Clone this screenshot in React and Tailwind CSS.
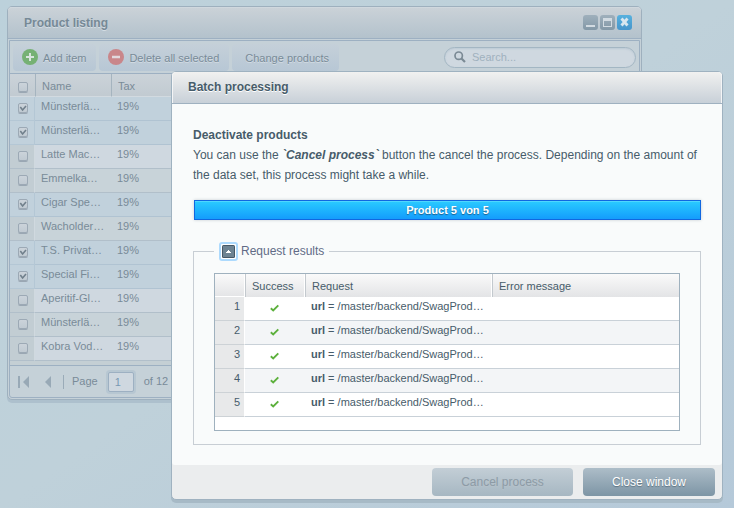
import React from "react";

const products = [
  { name: "Münsterlä…", selected: true },
  { name: "Münsterlä…", selected: true },
  { name: "Latte Mac…", selected: false },
  { name: "Emmelka…", selected: false },
  { name: "Cigar Spe…", selected: true },
  { name: "Wacholder…", selected: false },
  { name: "T.S. Privat…", selected: true },
  { name: "Special Fi…", selected: true },
  { name: "Aperitif-Gl…", selected: false },
  { name: "Münsterlä…", selected: false },
  { name: "Kobra Vod…", selected: false },
];

const requests = [1, 2, 3, 4, 5];

function CheckBox({ label, checked }) {
  return (
    <label className="relative ml-2 block size-[10px]">
      <input
        type="checkbox"
        defaultChecked={checked}
        aria-label={label}
        className="peer block size-full appearance-none rounded-[2px] border border-[#9ca9b5] bg-linear-to-b from-[#cbd3da] to-[#c0cad2] shadow-[0_1px_0_#9aa7b3]"
      />
      <svg
        viewBox="0 0 10 10"
        className="pointer-events-none absolute inset-0 hidden size-full peer-checked:block"
        fill="none"
        stroke="#71808c"
        strokeWidth="1.6"
      >
        <path d="M2.300 4 4.600 7 8 3" />
      </svg>
    </label>
  );
}

function ToolButton({ children }) {
  return (
    <button
      type="button"
      className="flex h-[27px] items-center gap-[5px] rounded bg-linear-to-b from-[#c5d0d9] to-[#b7c7d5] text-[11px] text-[#798b98] [text-shadow:0_1px_0_#d3dce3]"
    >
      {children}
    </button>
  );
}

function ProductWindow() {
  return (
    <section className="absolute top-[6px] right-[92px] left-[7px] rounded-[5px] border border-[#9eb0be] bg-[#c5d1d8] shadow-[0_3px_0_#adc0cd]">
      <header className="flex h-8 items-center justify-between rounded-t border-b border-[#9db0c2] bg-linear-to-b from-[#cbd2d8] to-[#b3c2cc] pr-[9px] pl-4 shadow-[inset_0_1px_0_#d0d8de]">
        <h2 className="text-xs leading-3 font-bold text-[#768996] [text-shadow:0_1px_0_#d3dce3]">Product listing</h2>
        <div className="flex gap-[2px]">
          <button type="button" aria-label="Minimize" className="size-[15px] rounded-[3px] bg-linear-to-b from-[#9fb0bc] to-[#8398a7]">
            <svg viewBox="0 0 15 15" className="size-full">
              <path d="M3 10h9v2H3z" fill="#d2dbe2" />
            </svg>
          </button>
          <button type="button" aria-label="Maximize" className="size-[15px] rounded-[3px] bg-linear-to-b from-[#9fb0bc] to-[#8398a7]">
            <svg viewBox="0 0 15 15" className="size-full">
              <path fillRule="evenodd" d="M3 3h9v9H3zM4 6v5h7V6z" fill="#d2dbe2" />
            </svg>
          </button>
          <button type="button" aria-label="Close" className="size-[15px] rounded-[3px] bg-linear-to-b from-[#57b1de] to-[#4795cb]">
            <svg viewBox="0 0 15 15" className="size-full">
              <path d="M4.500 3.500 10.500 10.500M10.500 3.500 4.500 10.500" stroke="#d8e6ef" strokeWidth="2.800" />
            </svg>
          </button>
        </div>
      </header>

      <div className="mx-px mt-px mb-px rounded-b-[3px] border border-[#9db0c2]">
        <div className="flex h-8 items-center gap-[3px] px-[3px]">
          <ToolButton>
            <svg viewBox="0 0 16 16" className="ml-[9px] size-4">
              <circle cx="8" cy="8" r="8" fill="#76b174" />
              <path d="M8 4v8M4 8h8" stroke="#d8e4dd" strokeWidth="2" />
            </svg>
            <span className="pt-[2px] pr-[10px]">Add item</span>
          </ToolButton>
          <ToolButton>
            <svg viewBox="0 0 16 16" className="ml-[9px] size-4">
              <circle cx="8" cy="8" r="8" fill="#c9868a" />
              <path d="M4 8h8" stroke="#e2d8dd" strokeWidth="2.500" />
            </svg>
            <span className="pt-[2px] pr-[10px]">Delete all selected</span>
          </ToolButton>
          <ToolButton>
            <span className="pt-[2px] pr-[10px] pl-[13px]">Change products</span>
          </ToolButton>
          <label className="ml-auto flex h-[21px] w-48 items-center gap-[6px] rounded-full border border-[#a3b6c3] bg-[#cfd8e0] pl-[9px] shadow-[inset_0_1px_2px_#bccad5]">
            <svg viewBox="0 0 12 12" className="size-3 shrink-0" fill="none" stroke="#7b8a95">
              <circle cx="4.700" cy="4.700" r="3.700" strokeWidth="1.700" />
              <path d="M7.500 7.500 11 11" strokeWidth="2.200" />
            </svg>
            <input
              type="text"
              aria-label="Search"
              placeholder="Search..."
              className="min-w-0 flex-1 bg-transparent text-[11px] text-[#798b98] outline-none placeholder:text-[#9fb1be]"
            />
          </label>
        </div>

        <div className="border-y border-[#9db0c2] bg-[#c4cfd4] pb-1">
          <table className="w-full table-fixed border-separate border-spacing-0 text-left text-[11px] text-[#798b98]">
            <colgroup>
              <col className="w-[25px]" />
              <col className="w-[76px]" />
              <col />
            </colgroup>
            <thead>
              <tr className="bg-linear-to-b from-[#cbd3d9] to-[#c1cad1]">
                <th className="h-[23px] border-b border-[#d2dae0] p-0 pt-[3px]">
                  <CheckBox label="Select all" checked={false} />
                </th>
                <th className="border-b border-l border-b-[#d2dae0] border-l-[#a5b4bf] p-0 pt-[2px] pl-[6px] font-normal">Name</th>
                <th className="border-b border-l border-b-[#d2dae0] border-l-[#a5b4bf] p-0 pt-[2px] pl-[6px] font-normal">Tax</th>
              </tr>
            </thead>
            <tbody>
              {products.map((product, index) => {
                const cell = product.selected
                  ? "border-b border-[#b0c3d2] bg-[#c1d1dc]"
                  : index % 2
                    ? "border-b border-[#b1bfca] bg-[#c8d3d9]"
                    : "border-b border-[#b1bfca] bg-[#cfd8e0]";
                const lead = product.selected
                  ? "border-r border-b border-[#b4c7d5] bg-[#c1d1dc]"
                  : "border-r border-b border-r-[#d0d9df] border-b-[#b1bfca] bg-[#c2cdd3]";
                return (
                  <tr key={index}>
                    <td className={"h-6 p-0 pt-[6px] align-top " + lead}>
                      <CheckBox label={"Select " + product.name} checked={product.selected} />
                    </td>
                    <td className={"p-0 pt-[3px] pl-[6px] align-top leading-[13px] whitespace-nowrap " + cell}>{product.name}</td>
                    <td className={"p-0 pt-[3px] pl-[6px] align-top leading-[13px] " + cell}>19%</td>
                  </tr>
                );
              })}
            </tbody>
          </table>
        </div>

        <footer className="flex h-[31px] items-center pl-2 text-[11px] text-[#798b98]">
          <button type="button" aria-label="First page" className="w-[27px]">
            <svg viewBox="0 0 11 12" className="h-3 w-[11px]" fill="#98a9b6">
              <path d="M0 0h2v12H0zM11 0v12L5 6z" />
            </svg>
          </button>
          <button type="button" aria-label="Previous page" className="w-[18px]">
            <svg viewBox="0 0 6 12" className="h-3 w-[6px]" fill="#98a9b6">
              <path d="M6 0v12L0 6z" />
            </svg>
          </button>
          <span className="h-[14px] w-px bg-[#9aabb8]" />
          <label htmlFor="page" className="pr-[10px] pl-2">Page</label>
          <input
            id="page"
            type="text"
            defaultValue="1"
            className="h-5 w-[26px] rounded-[2px] border border-[#9db0c2] bg-[#cfd8e0] pl-[6px] text-[#7898b4] shadow-[0_0_0_2px_#b7c7d2] outline-none"
          />
          <span className="pl-[10px]">of 12</span>
        </footer>
      </div>
    </section>
  );
}

function BatchDialog() {
  return (
    <section
      role="dialog"
      aria-labelledby="batch-title"
      className="absolute top-[71px] right-[11px] left-[171px] rounded-[5px] border border-[#9fb2c0] bg-[#ebedee] shadow-[0_3px_0_#a7bac6]"
    >
      <header className="flex h-8 items-center rounded-t border-b border-[#9fb1c0] bg-linear-to-b from-[#f1f1f0] to-[#c8d0d8] pb-[2px] pl-4 shadow-[inset_1px_0_0_#f4f5f6,inset_-1px_0_0_#f4f5f6]">
        <h2 id="batch-title" className="text-xs font-bold text-[#475c6a] [text-shadow:0_1px_0_#ffffff]">Batch processing</h2>
      </header>

      <div className="rounded-b-[3px] bg-[#f9fbfb] px-[21px] pt-[21px] pb-5">
        <h3 className="text-xs leading-5 font-bold text-[#475c6a]">Deactivate products</h3>
        <p className="text-xs leading-5 text-[#475c6a]">
          You can use the <strong className="font-bold italic">`Cancel process`</strong> button the cancel the process. Depending on the amount of the data set, this process might take a while.
        </p>

        <div
          role="progressbar"
          aria-label="Progress"
          aria-valuenow={5}
          aria-valuemax={5}
          className="mt-[15px] ml-px flex h-5 items-center justify-center border border-[#1167e0] bg-linear-to-b from-[#2bcbff] to-[#159cfc] text-[11px] font-bold text-white shadow-[inset_0_1px_0_#4fd6ff,0_0_3px_#c5ccd2] [text-shadow:0_1px_1px_#1c5f8c]"
        >
          Product 5 von 5
        </div>

        <fieldset className="mt-[21px] border border-[#c8ced4] px-5 pb-[13px]">
          <legend className="flex h-5 items-center gap-[3px] px-[5px] text-xs text-[#616b86]">
            <button
              type="button"
              aria-label="Collapse request results"
              className="flex size-[19px] shrink-0 items-center justify-center rounded-[3px] border-2 border-[#addafd] bg-white"
            >
              <svg viewBox="0 0 13 13" className="size-[13px] shrink-0">
                <rect width="13" height="13" rx="1.500" fill="#465866" />
                <rect x="1" y="1" width="11" height="11" fill="#6d8392" />
                <path d="M6 5h1v1h1v1h1v1H4V7h1V6h1z" fill="#ffffff" />
              </svg>
            </button>
            Request results
          </legend>

          <div className="mt-3 border border-[#9fb1be] bg-white pb-[13px]">
            <table className="w-full table-fixed border-separate border-spacing-0 text-left text-[11px] text-[#475c6a]">
              <colgroup>
                <col className="w-[30px]" />
                <col className="w-[60px]" />
                <col className="w-[187px]" />
                <col />
              </colgroup>
              <thead>
                <tr className="bg-linear-to-b from-[#fafafa] to-[#e3e4e6]">
                  <th className="h-[23px] border-r border-b border-white p-0" aria-label="Number" />
                  <th className="border-r border-l border-r-white border-l-[#c3c9ce] p-0 pt-[2px] pl-[6px] font-normal">Success</th>
                  <th className="border-r border-l border-r-white border-l-[#c3c9ce] p-0 pt-[2px] pl-[6px] font-normal">Request</th>
                  <th className="border-l border-[#c3c9ce] p-0 pt-[2px] pl-[6px] font-normal">Error message</th>
                </tr>
              </thead>
              <tbody className="leading-[13px] whitespace-nowrap">
                {requests.map((number) => {
                  const cell = number % 2 ? "border-b border-[#c9d1d8] bg-white" : "border-b border-[#c9d1d8] bg-[#f3f5f7]";
                  return (
                    <tr key={number}>
                      <td className="h-6 border-r border-b border-r-white border-b-[#cdd2d6] bg-[#e8e9ea] p-0 pt-[3px] pr-1 text-right align-top">{number}</td>
                      <td className={"p-0 pt-[7px] pl-[25px] align-top " + cell}>
                        <svg viewBox="0 0 9 8" className="block h-2 w-[9px]" role="img" aria-label="Success">
                          <path d="M0.800 4.300 3.200 6.400 8.300 1.300" fill="none" stroke="#5cb03c" strokeWidth="1.900" />
                        </svg>
                      </td>
                      <td className={"p-0 pt-[3px] pl-[6px] align-top " + cell}>
                        <b>url</b> = /master/backend/SwagProd…
                      </td>
                      <td className={"p-0 " + cell} />
                    </tr>
                  );
                })}
              </tbody>
            </table>
          </div>
        </fieldset>
      </div>

      <footer className="flex justify-end gap-[10px] pt-[3px] pr-[7px] pb-[3px]">
        <button
          type="button"
          disabled
          className="h-7 w-[141px] rounded bg-linear-to-b from-[#c3ced6] to-[#a6b7c2] text-xs text-[#8d9ba6] [text-shadow:0_1px_1px_#b7c2ca]"
        >
          Cancel process
        </button>
        <button
          type="button"
          className="h-7 w-33 rounded bg-linear-to-b from-[#adbdc8] to-[#7d95a5] text-xs text-white [text-shadow:0_1px_1px_#5d7280]"
        >
          Close window
        </button>
      </footer>
    </section>
  );
}

export default function App() {
  return (
    <main className="relative min-h-screen overflow-hidden bg-linear-to-br from-[#bcd1db] via-[#bfd1da] to-[#b5c9d9] font-['Liberation_Sans',Arial,sans-serif]">
      <ProductWindow />
      <BatchDialog />
    </main>
  );
}
